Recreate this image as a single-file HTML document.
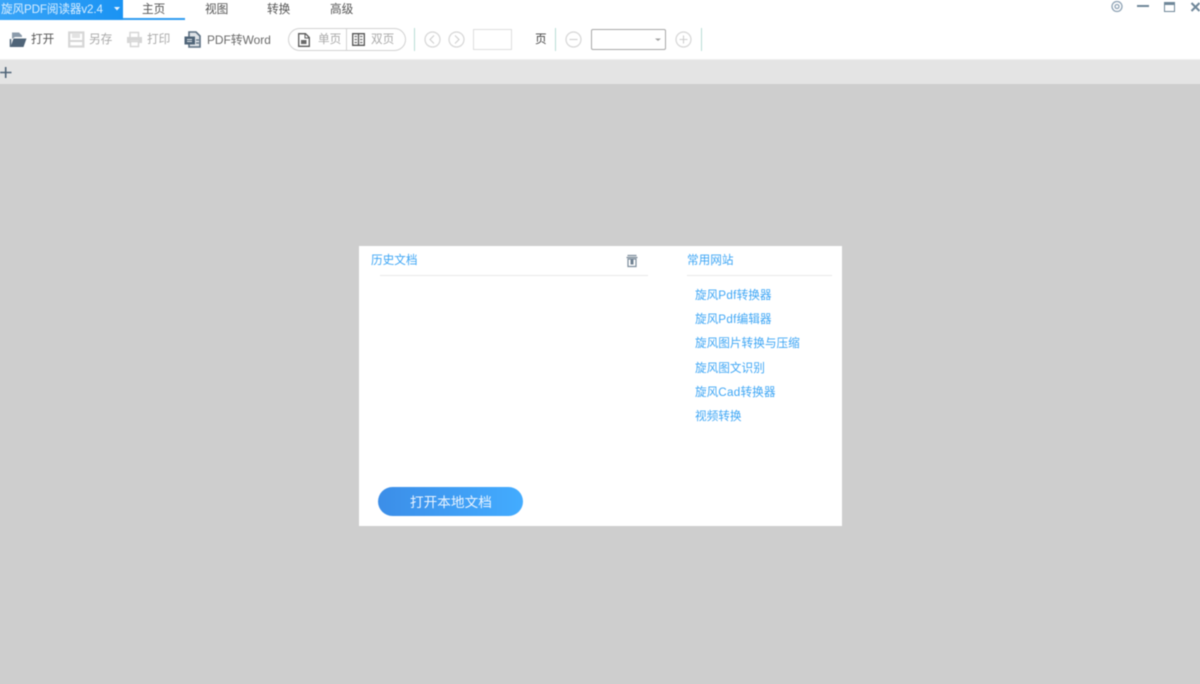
<!DOCTYPE html>
<html><head><meta charset="utf-8"><style>
*{box-sizing:border-box}
html,body{margin:0;padding:0;width:1200px;height:684px;overflow:hidden;background:#cecece;font-family:"Liberation Sans","Noto Sans CJK SC",sans-serif;font-size:11.65px}
#w{position:absolute;left:0;top:0;width:1200px;height:684px;overflow:hidden}
#p{position:absolute;left:0;top:0;width:1200px;height:684px;filter:blur(.4px)}
.t{position:absolute;white-space:nowrap;line-height:16px;margin-top:1px}
.a{position:absolute}
.b{color:#3ea6f5}
.g{color:#a9a9a9}
.d{color:#555}
.l{letter-spacing:.3px}
svg{position:absolute;overflow:visible}
</style></head><body><div id="w"><div id="p">
<div class="a" style="left:-6px;top:-6px;width:1212px;height:70px;background:#fff"></div>
<div class="a" style="left:-6px;top:-6px;width:129px;height:26px;background:linear-gradient(90deg,#3aa5f8,#1a93f3)"></div>
<div class="t" style="left:1px;top:1px;color:#d9eeff;font-size:11.65px;letter-spacing:-.14px">旋风PDF阅读器v2.4</div>
<svg style="left:114px;top:7px" width="6" height="4"><path d="M0 0H6L3 3.5Z" fill="#e8f4ff"/></svg>
<div class="a" style="left:123px;top:18px;width:62px;height:2px;background:#2f9bf0"></div>
<div class="t d" style="left:142px;top:1px">主页</div>
<div class="t d" style="left:205px;top:1px">视图</div>
<div class="t d" style="left:267px;top:1px">转换</div>
<div class="t d" style="left:330px;top:1px">高级</div>

<svg style="left:1111px;top:0" width="12" height="12"><circle cx="6" cy="6.5" r="5" fill="none" stroke="#8fa3b5" stroke-width="1.3"/><circle cx="6" cy="6.5" r="2" fill="none" stroke="#8fa3b5" stroke-width="1.3"/></svg>
<div class="a" style="left:1137px;top:5px;width:12px;height:2px;background:#6f8799"></div>
<div class="a" style="left:1164px;top:2px;width:11px;height:10px;border:1.5px solid #6f8799;border-top-width:3px"></div>
<svg style="left:1191px;top:2px" width="9" height="10"><path d="M.5 1L8.5 9M8.5 1L.5 9" stroke="#6f8799" stroke-width="2" fill="none"/></svg>

<svg style="left:10px;top:31px" width="17" height="17"><path d="M2 8V1.5H9L12 4.5V6H5L2 8Z" fill="#8b9bab"/><path d="M0.5 16L3.5 7.5H16.5L13.5 16Z" fill="#4f6478"/><path d="M0.5 8V16" stroke="#4f6478" stroke-width="1.5"/></svg>
<div class="t" style="left:31px;top:31px;color:#555">打开</div>
<svg style="left:68px;top:31px" width="17" height="17"><path d="M1.2 1.5H15.3V15.5H1.2Z" fill="none" stroke="#d6d6d6" stroke-width="2.2"/><path d="M4 2H12V7H4Z" fill="#e2e2e2"/><path d="M2 10H15" stroke="#d6d6d6" stroke-width="2"/></svg>
<div class="t g" style="left:89px;top:31px">另存</div>
<svg style="left:126px;top:31px" width="17" height="17"><path d="M4 6V1.5H12.5V6" fill="none" stroke="#d6d6d6" stroke-width="1.5"/><path d="M1 6H16V12H13V9.5H4V12H1Z" fill="#d6d6d6"/><path d="M4.5 10.5H12.5V15.5H4.5Z" fill="none" stroke="#d6d6d6" stroke-width="1.5"/></svg>
<div class="t g" style="left:147px;top:31px">打印</div>
<svg style="left:184px;top:31px" width="17" height="17"><path d="M5 1H12L16 5V16H5Z" fill="#dfe3e7" stroke="#5b6f82" stroke-width="1.6"/><path d="M0.5 5.5H11V13.5H0.5Z" fill="#4f6478"/><path d="M3 8.5H8M3 10.5H8" stroke="#dfe5ea" stroke-width="1"/><path d="M12 9H15M12 12H15" stroke="#5b6f82" stroke-width="1.3"/></svg>
<div class="t" style="left:207px;top:32px;margin-top:0;color:#6a6a6a;font-size:11.9px">PDF转Word</div>

<div class="a" style="left:288px;top:28px;width:118px;height:23px;border:1px solid #d2d2d2;border-radius:12px"></div>
<div class="a" style="left:346px;top:29px;width:1px;height:21px;background:#d2d2d2"></div>
<svg style="left:298px;top:33px" width="12" height="14"><path d="M.7.7H7.5L11.3 4.5V13.3H.7Z" fill="none" stroke="#5a5a5a" stroke-width="1.3"/><path d="M3 7H8.5V11H3Z" fill="#6a6a6a"/><path d="M7 1V5H11" fill="none" stroke="#5a5a5a"/></svg>
<div class="t g" style="left:318px;top:31px">单页</div>
<svg style="left:352px;top:33px" width="13" height="13"><path d="M.7.7H12.3V12.3H.7ZM6.5 1V12" fill="none" stroke="#555" stroke-width="1.3"/><path d="M2.5 3.5H5M2.5 6.5H5M2.5 9.5H5M8 3.5H10.5M8 6.5H10.5M8 9.5H10.5" stroke="#777" stroke-width="1.2"/></svg>
<div class="t g" style="left:371px;top:31px">双页</div>

<div class="a" style="left:414px;top:28px;width:1px;height:23px;background:#b9dcd6"></div>
<svg style="left:424px;top:31px" width="17" height="17"><circle cx="8.5" cy="8.5" r="7.5" fill="none" stroke="#d6d6d6" stroke-width="1.2"/><path d="M10 4.5L6 8.5L10 12.5" fill="none" stroke="#cfcfcf" stroke-width="1.1"/></svg>
<svg style="left:448px;top:31px" width="17" height="17"><circle cx="8.5" cy="8.5" r="7.5" fill="none" stroke="#d6d6d6" stroke-width="1.2"/><path d="M7 4.5L11 8.5L7 12.5" fill="none" stroke="#cfcfcf" stroke-width="1.1"/></svg>
<div class="a" style="left:473px;top:29px;width:39px;height:21px;border:1px solid #dedede"></div>
<div class="t" style="left:535px;top:31px;color:#444">页</div>
<div class="a" style="left:555px;top:28px;width:1px;height:23px;background:#b9dcd6"></div>
<svg style="left:565px;top:31px" width="17" height="17"><circle cx="8.5" cy="8.5" r="7.5" fill="none" stroke="#d6d6d6" stroke-width="1.2"/><path d="M4.5 8.5H12.5" stroke="#cfcfcf" stroke-width="1.1"/></svg>
<div class="a" style="left:591px;top:29px;width:75px;height:21px;border:1px solid #a8a8a8;border-radius:2px;background:#fff"></div>
<svg style="left:655px;top:38px" width="6" height="4"><path d="M0 .5H6L3 3Z" fill="#a0a0a0"/></svg>
<svg style="left:675px;top:31px" width="17" height="17"><circle cx="8.5" cy="8.5" r="7.5" fill="none" stroke="#d6d6d6" stroke-width="1.2"/><path d="M4.5 8.5H12.5M8.5 4.5V12.5" stroke="#cfcfcf" stroke-width="1.1"/></svg>
<div class="a" style="left:701px;top:28px;width:1px;height:23px;background:#b9dcd6"></div>

<div class="a" style="left:-6px;top:59px;width:1212px;height:1px;background:#eeeeee"></div>
<div class="a" style="left:-6px;top:60px;width:1212px;height:24px;background:#e4e4e4"></div>
<svg style="left:0;top:67px" width="12" height="12"><path d="M0 5.5H11.5M5.7 0V11" stroke="#4f6478" stroke-width="1.6"/></svg>
<div class="a" style="left:-6px;top:84px;width:1212px;height:606px;background:#cecece"></div>

<div class="a" style="left:359px;top:246px;width:483px;height:280px;background:#fff"></div>
<div class="t b" style="left:371px;top:252px">历史文档</div>
<svg style="left:626px;top:254px" width="12" height="13"><path d="M1.5 1.5H10.5M0.5 3.5H11.5" stroke="#7d8d9c" stroke-width="1.3"/><path d="M2 5H10V12.5H2Z" fill="none" stroke="#7d8d9c" stroke-width="1.2"/><path d="M4.5 5.5H7.5V10.5H4.5Z" fill="#6f8192"/></svg>
<div class="a" style="left:380px;top:275px;width:268px;height:1px;background:#e9e9e9"></div>
<div class="t b" style="left:687px;top:252px">常用网站</div>
<div class="a" style="left:687px;top:275px;width:145px;height:1px;background:#e9e9e9"></div>
<div class="t b" style="left:695px;top:287px">旋风<span class="l">Pdf</span>转换器</div>
<div class="t b" style="left:695px;top:311px">旋风<span class="l">Pdf</span>编辑器</div>
<div class="t b" style="left:695px;top:335px">旋风图片转换与压缩</div>
<div class="t b" style="left:695px;top:360px">旋风图文识别</div>
<div class="t b" style="left:695px;top:384px">旋风<span class="l">Cad</span>转换器</div>
<div class="t b" style="left:695px;top:408px">视频转换</div>
<div class="a" style="left:378px;top:487px;width:145px;height:29px;border-radius:15px;background:linear-gradient(90deg,#3c8ee8,#43acff)"></div>
<div class="t" style="left:410px;top:495px;margin-top:0;color:#eaf4ff;font-size:13.65px">打开本地文档</div>
</div></div></body></html>
